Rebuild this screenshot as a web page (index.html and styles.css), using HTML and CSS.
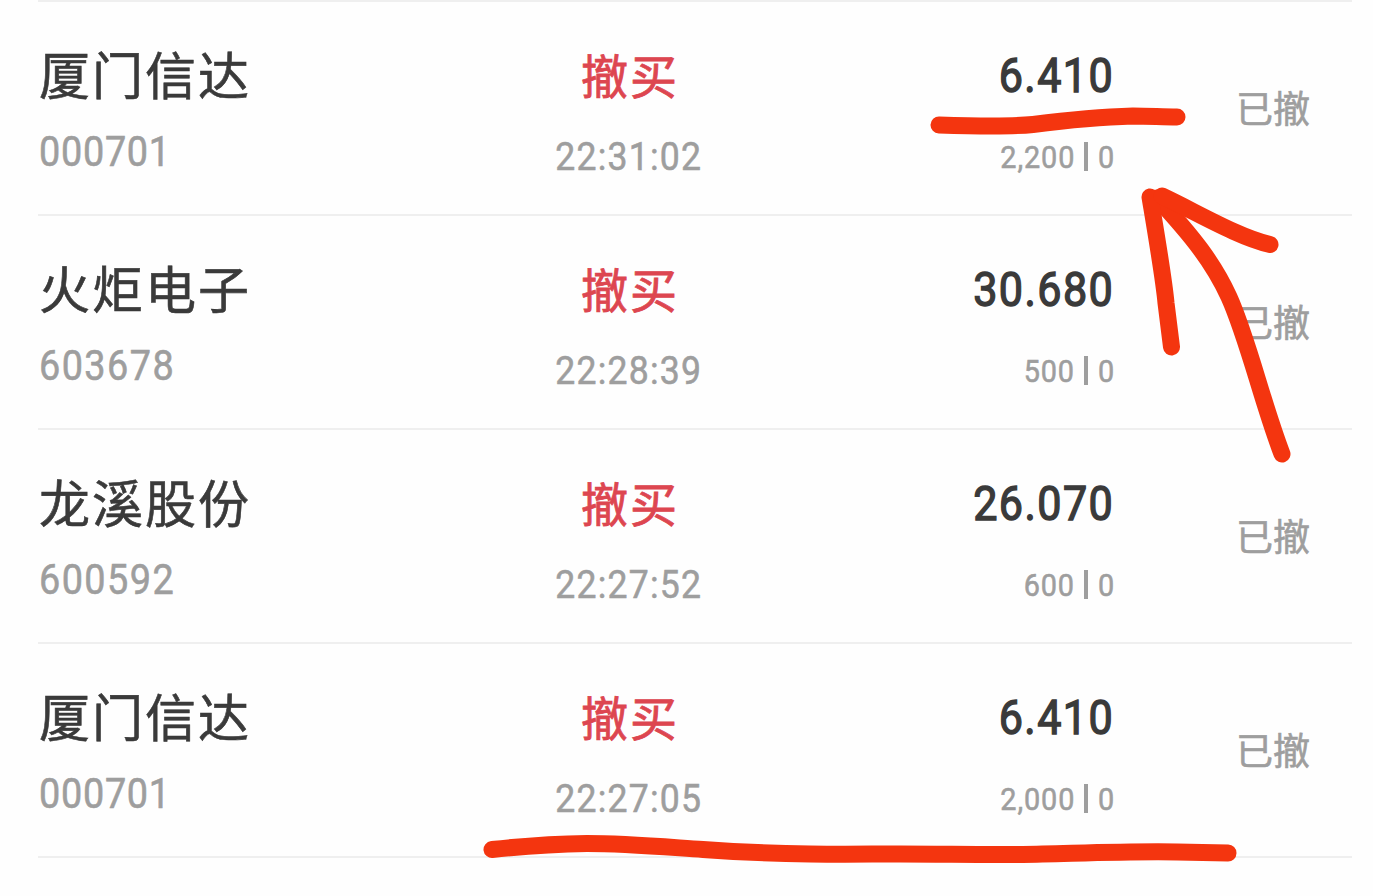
FILE: index.html
```html
<!DOCTYPE html>
<html lang="zh-CN">
<head>
    <meta charset="UTF-8">
    <title>当日委托</title>
    <link rel="stylesheet" href="styles.css">
</head>
<body>
<div class="orders">
    <div class="order">
        <div class="stock">
            <div class="name">厦门信达</div>
            <div class="code"><span>000701</span></div>
        </div>
        <div class="action">
            <div class="type">撤买</div>
            <div class="time"><span>22:31:02</span></div>
        </div>
        <div class="deal">
            <div class="price"><span>6.410</span></div>
            <div class="amount"><span>2,200</span><i class="bar"></i><span>0</span></div>
        </div>
        <div class="status">已撤</div>
    </div>
    <div class="order">
        <div class="stock">
            <div class="name">火炬电子</div>
            <div class="code wide"><span>603678</span></div>
        </div>
        <div class="action">
            <div class="type">撤买</div>
            <div class="time"><span>22:28:39</span></div>
        </div>
        <div class="deal">
            <div class="price"><span>30.680</span></div>
            <div class="amount"><span>500</span><i class="bar"></i><span>0</span></div>
        </div>
        <div class="status">已撤</div>
    </div>
    <div class="order">
        <div class="stock">
            <div class="name">龙溪股份</div>
            <div class="code wide"><span>600592</span></div>
        </div>
        <div class="action">
            <div class="type">撤买</div>
            <div class="time"><span>22:27:52</span></div>
        </div>
        <div class="deal">
            <div class="price"><span>26.070</span></div>
            <div class="amount"><span>600</span><i class="bar"></i><span>0</span></div>
        </div>
        <div class="status">已撤</div>
    </div>
    <div class="order">
        <div class="stock">
            <div class="name">厦门信达</div>
            <div class="code"><span>000701</span></div>
        </div>
        <div class="action">
            <div class="type">撤买</div>
            <div class="time"><span>22:27:05</span></div>
        </div>
        <div class="deal">
            <div class="price"><span>6.410</span></div>
            <div class="amount"><span>2,000</span><i class="bar"></i><span>0</span></div>
        </div>
        <div class="status">已撤</div>
    </div>
</div>

<svg class="marks" viewBox="0 0 1373 896">
    <!-- underlines -->
    <path d="M939 125C970 126 1010 127 1033 124.500C1060 121 1095 117 1133 116C1150 116 1162 117 1177 117"/>
    <path d="M492 849.500C525 846 553 844 587 843.500C625 843.500 665 847 703 849.500C745 852.500 775 853.500 810 854C850 854.500 870 854 900 854C945 854 980 855 1023 854.500C1065 854 1125 851 1177 852L1228 853"/>
    <!-- arrow -->
    <path d="M1282 454C1262 402 1248 339 1229 297C1213 262 1192 236 1157 198"/>
    <path d="M1150 197C1158 245 1164 280 1166 303L1171.500 347"/>
    <path d="M1162 196C1198 213 1238 237 1270 244.500"/>
</svg>
</body>
</html>
```
FILE: styles.css
```css
body {
    margin: 0;
    height: 896px;
    overflow: hidden;
    position: relative;
    background-color: #fefefe;
    font-family: Roboto, "Noto Sans CJK SC", sans-serif;
    color: #3a3a3a;
}

.orders {
    margin: 0 21px 0 38px;
    border-top: 2px solid #efefef;
}

.order {
    display: grid;
    grid-template-columns: 460px 262px 354px 1fr;
    height: 212px;
    border-bottom: 2px solid #efefef;
    white-space: nowrap;
}

/* digits are drawn narrower than the font gives */
.code span, .time span, .price span, .amount span {
    display: inline-block;
    transform: scaleX(0.9);
}

.code, .time, .amount, .status {
    color: #9e9e9e;
    -webkit-text-stroke: 0.6px #9e9e9e;
}

.name {
    padding: 36px 0 0 1px;
    font-size: 51px;
    line-height: 80px;
    letter-spacing: 2px;
    -webkit-text-stroke: 0.6px #3a3a3a;
}

.code {
    padding-left: 1px;
    font-size: 42px;
    line-height: 68px;
    letter-spacing: 0.8px;
}

.code.wide {
    letter-spacing: 1.6px;
}

.code span {
    transform-origin: left;
}

.action {
    text-align: center;
}

.type {
    padding: 36px 0 0 2px;
    font-size: 47px;
    line-height: 80px;
    letter-spacing: 2px;
    color: #dd4650;
    -webkit-text-stroke: 0.8px #dd4650;
}

.time {
    font-size: 39.5px;
    line-height: 78px;
    letter-spacing: 1.4px;
}

.deal {
    text-align: right;
}

.price {
    padding: 34px 0 0;
    font-size: 49px;
    line-height: 80px;
    letter-spacing: 1.6px;
    -webkit-text-stroke: 1.4px #3a3a3a;
}

.price span {
    transform: scaleX(0.88);
    transform-origin: right;
}

.amount {
    display: flex;
    justify-content: flex-end;
    align-items: center;
    height: 81px;
    font-size: 32px;
    letter-spacing: 1px;
    margin-right: -1px;
}

.amount span {
    transform-origin: right;
}

.bar {
    width: 4px;
    height: 29px;
    margin: 0 8px 0 9px;
    background-color: #9e9e9e;
}

.status {
    padding-left: 122px;
    font-size: 37px;
    line-height: 217px;
}

.marks {
    position: absolute;
    top: 0;
    left: 0;
    width: 1373px;
    height: 896px;
    fill: none;
    stroke: #f4350f;
    stroke-width: 17;
    stroke-linecap: round;
    stroke-linejoin: round;
}
```
